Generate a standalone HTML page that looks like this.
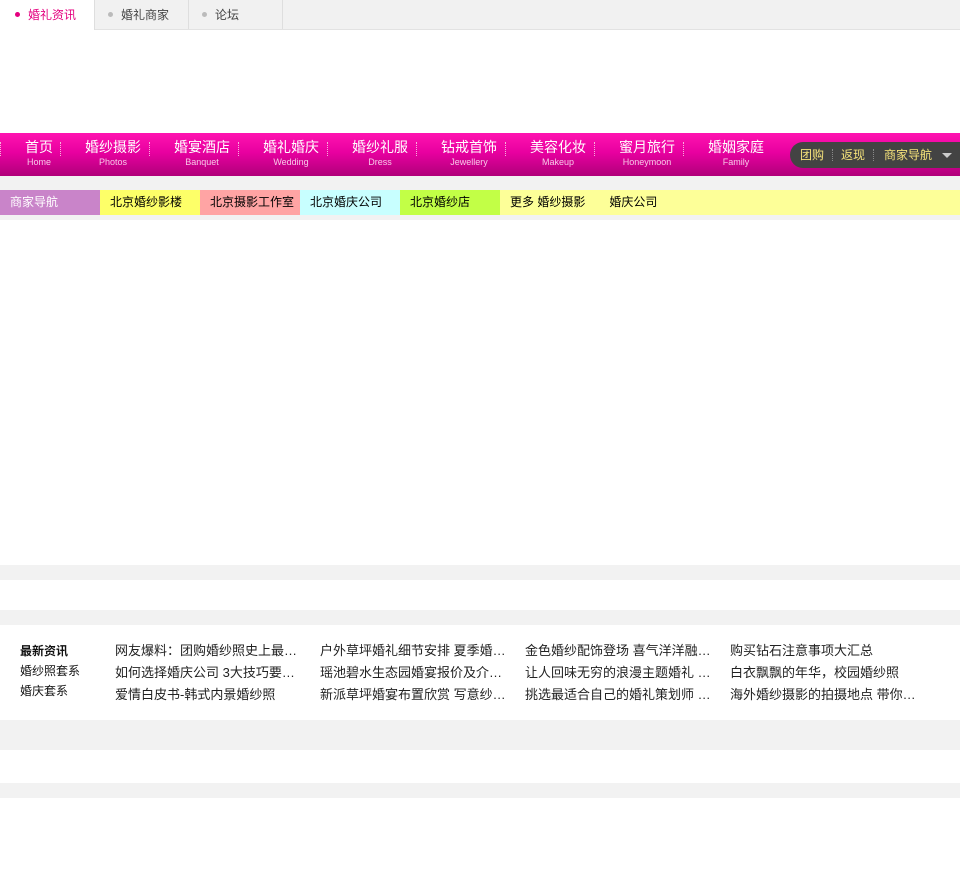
<!DOCTYPE html><html><head><meta charset="utf-8"><style>
body{margin:0;width:960px;height:873px;background:#fff;font-family:"Liberation Sans","Noto Sans CJK SC",sans-serif;font-size:12px;position:relative;overflow:hidden}
.a{position:absolute}
.tabs{top:0;left:0;width:960px;height:29px;background:#f1f1f1;border-bottom:1px solid #e2e2e2}
.tab{position:absolute;top:0;height:29px;line-height:31px;border-right:1px solid #dedede;color:#444;font-size:12px}
.tab i{display:inline-block;width:5px;height:5px;border-radius:50%;background:#bbb;margin:0 8px 2px 0;vertical-align:middle}
.nav{top:133px;left:0;width:960px;height:43px;background:linear-gradient(#ff14b0,#e800a0 45%,#b0007a)}
.ni{position:absolute;top:6px;text-align:center;color:#fff;font-size:14px;line-height:17px}
.ni small{display:block;font-size:9px;color:#f8c8e8;line-height:13px}
.sep{position:absolute;top:9px;height:14px;border-left:1px dotted #f7b0dd}
.sub{top:190px;height:25px;line-height:24px;font-size:12px}
</style></head><body>
<div class="a tabs">
<div class="tab" style="left:0;width:94px;background:#fff;height:30px;color:#e4007f;text-indent:15px"><i style="background:#e4007f"></i>婚礼资讯</div>
<div class="tab" style="left:95px;width:93px;text-indent:13px"><i></i>婚礼商家</div>
<div class="tab" style="left:189px;width:93px;text-indent:13px"><i></i>论坛</div>
</div>
<div class="a nav">
<div class="sep" style="left:0"></div>
<div class="ni" style="left:20px;width:38px">首页<small>Home</small></div><div class="sep" style="left:60px"></div>
<div class="ni" style="left:84px;width:58px">婚纱摄影<small>Photos</small></div><div class="sep" style="left:149px"></div>
<div class="ni" style="left:173px;width:58px">婚宴酒店<small>Banquet</small></div><div class="sep" style="left:238px"></div>
<div class="ni" style="left:262px;width:58px">婚礼婚庆<small>Wedding</small></div><div class="sep" style="left:327px"></div>
<div class="ni" style="left:351px;width:58px">婚纱礼服<small>Dress</small></div><div class="sep" style="left:416px"></div>
<div class="ni" style="left:440px;width:58px">钻戒首饰<small>Jewellery</small></div><div class="sep" style="left:505px"></div>
<div class="ni" style="left:529px;width:58px">美容化妆<small>Makeup</small></div><div class="sep" style="left:594px"></div>
<div class="ni" style="left:618px;width:58px">蜜月旅行<small>Honeymoon</small></div><div class="sep" style="left:683px"></div>
<div class="ni" style="left:707px;width:58px">婚姻家庭<small>Family</small></div>
<div class="a" style="left:790px;top:9px;width:170px;height:26px;background:#434343;border-radius:13px 0 0 13px;color:#f5e27a;font-size:12px;line-height:26px">
<span class="a" style="left:10px">团购</span><span class="a" style="left:42px;top:7px;height:12px;border-left:1px dotted #888"></span>
<span class="a" style="left:51px">返现</span><span class="a" style="left:83px;top:7px;height:12px;border-left:1px dotted #888"></span>
<span class="a" style="left:94px">商家导航</span>
<span class="a" style="left:152px;top:11px;border:5px solid transparent;border-top:5px solid #ccc;width:0;height:0"></span></div>
</div>
<div class="a" style="top:176px;left:0;width:960px;height:14px;background:#f2f2f2"></div>
<div class="a sub" style="left:0;width:100px;background:#c984c9;color:#fff;text-indent:10px">商家导航</div>
<div class="a sub" style="left:100px;width:100px;background:#fdff68;text-indent:10px">北京婚纱影楼</div>
<div class="a sub" style="left:200px;width:100px;background:#ffa4a4;text-indent:10px">北京摄影工作室</div>
<div class="a sub" style="left:300px;width:100px;background:#c8ffff;text-indent:10px">北京婚庆公司</div>
<div class="a sub" style="left:400px;width:100px;background:#c2ff46;text-indent:10px">北京婚纱店</div>
<div class="a sub" style="left:500px;width:460px;background:#fdff98"><span style="margin-left:10px">更多 婚纱摄影</span><span style="margin-left:24px">婚庆公司</span></div>
<div class="a" style="top:215px;left:0;width:960px;height:5px;background:#f2f2f2"></div>
<div class="a" style="top:565px;left:0;width:960px;height:15px;background:#f2f2f2"></div>
<div class="a" style="top:610px;left:0;width:960px;height:15px;background:#f2f2f2"></div>
<div class="a" style="top:720px;left:0;width:960px;height:30px;background:#f2f2f2"></div>
<div class="a" style="top:783px;left:0;width:960px;height:15px;background:#f2f2f2"></div>
<div class="a" style="left:20px;top:641px;line-height:20px;font-size:12px;color:#111"><b>最新资讯</b><br>婚纱照套系<br>婚庆套系</div>
<div class="a" style="left:115px;top:640px;line-height:22px;font-size:13px;color:#222;white-space:nowrap">网友爆料：团购婚纱照史上最…<br>如何选择婚庆公司 3大技巧要…<br>爱情白皮书-韩式内景婚纱照</div>
<div class="a" style="left:320px;top:640px;line-height:22px;font-size:13px;color:#222;white-space:nowrap">户外草坪婚礼细节安排 夏季婚…<br>瑶池碧水生态园婚宴报价及介…<br>新派草坪婚宴布置欣赏 写意纱…</div>
<div class="a" style="left:525px;top:640px;line-height:22px;font-size:13px;color:#222;white-space:nowrap">金色婚纱配饰登场 喜气洋洋融…<br>让人回味无穷的浪漫主题婚礼 …<br>挑选最适合自己的婚礼策划师 …</div>
<div class="a" style="left:730px;top:640px;line-height:22px;font-size:13px;color:#222;white-space:nowrap">购买钻石注意事项大汇总<br>白衣飘飘的年华，校园婚纱照<br>海外婚纱摄影的拍摄地点 带你…</div>
</body></html>
